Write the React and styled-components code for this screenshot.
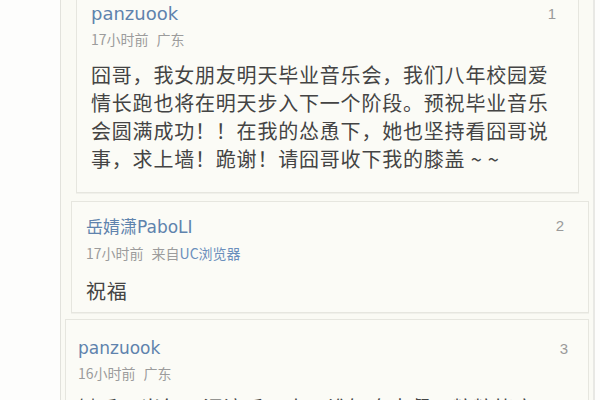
import React from 'react';
import styled, { createGlobalStyle } from 'styled-components';

const GlobalStyle = createGlobalStyle`
    html, body {
        margin: 0;
        padding: 0;
        height: 400px;
        overflow: hidden;
        background: #fdfdfc;
    }
`;

const Frame = styled.div`
    margin-left: 60px;
    width: 532px;
    height: 420px;
    margin-top: -10px;
    background: #fafaf4;
    border-left: 1px solid #e2e2dc;
    border-right: 2px solid #e8e8e4;
    display: flex;
    flex-direction: column;
    font-family: 'DejaVu Sans', 'Noto Sans CJK SC', sans-serif;
`;

const Card = styled.div`
    margin-left: ${(p) => p.left}px;
    margin-right: ${(p) => p.right}px;
    margin-top: ${(p) => p.top || 0}px;
    padding: ${(p) => p.pad || '10px 14px 14px'};
    background: #fbfbf6;
    border: 1px solid #e6e6df;
    box-shadow: 0 1px 0 #f0f0ea;
`;

const Head = styled.div`
    display: flex;
    justify-content: space-between;
    align-items: center;
    height: 24px;
`;

const Name = styled.span`
    color: #5f83ad;
    font-size: ${(p) => p.size || 18}px;
    font-family: 'DejaVu Sans', 'Noto Sans CJK SC', sans-serif;
`;

const Floor = styled.span`
    color: #9a9a9a;
    font-size: 15px;
    font-family: 'Liberation Sans', sans-serif;
    margin-right: ${(p) => p.gap || 10}px;
`;

const Meta = styled.div`
    margin-top: ${(p) => p.top || 3}px;
    color: #9c9c9c;
    font-size: 14px;
    font-family: 'Noto Sans CJK SC', sans-serif;
    height: 20px;
    line-height: 20px;
    span + span {
        margin-left: 8px;
    }
`;

const Link = styled.span`
    color: #6b8fbc;
`;

const Body = styled.div`
    margin-top: ${(p) => p.top || 10}px;
    width: 466px;
    color: #444;
    font-size: 20px;
    letter-spacing: 0.8px;
    line-height: 28px;
    font-family: 'Noto Sans CJK SC', sans-serif;
`;

export default function App() {
    return (
        <>
            <GlobalStyle />
            <Frame>
                <Card left={15} right={14} pad="10px 14px 19px">
                    <Head>
                        <Name>panzuook</Name>
                        <Floor gap={8}>1</Floor>
                    </Head>
                    <Meta top={4}>
                        <span>17小时前</span>
                        <span>广东</span>
                    </Meta>
                    <Body top={12}>
                        囧哥，我女朋友明天毕业音乐会，我们八年校园爱情长跑也将在明天步入下一个阶段。预祝毕业音乐会圆满成功！！在我的怂恿下，她也坚持看囧哥说事，求上墙！跪谢！请囧哥收下我的膝盖 ~ ~
                    </Body>
                </Card>
                <Card left={10} right={4} top={8} pad="11px 14px 7px">
                    <Head>
                        <Name size={17}>岳婧潇PaboLI</Name>
                        <Floor gap={10}>2</Floor>
                    </Head>
                    <Meta top={6}>
                        <span>17小时前</span>
                        <span>
                            来自<Link>UC浏览器</Link>
                        </span>
                    </Meta>
                    <Body top={14}>祝福</Body>
                </Card>
                <Card left={4} right={4} top={6} pad="16px 12px 14px">
                    <Head>
                        <Name size={17}>panzuook</Name>
                        <Floor gap={8}>3</Floor>
                    </Head>
                    <Meta top={3}>
                        <span>16小时前</span>
                        <span>广东</span>
                    </Meta>
                    <Body top={11}>锄禾日当午，汗滴禾下土，谁知盘中餐，粒粒皆辛苦。</Body>
                </Card>
            </Frame>
        </>
    );
}
